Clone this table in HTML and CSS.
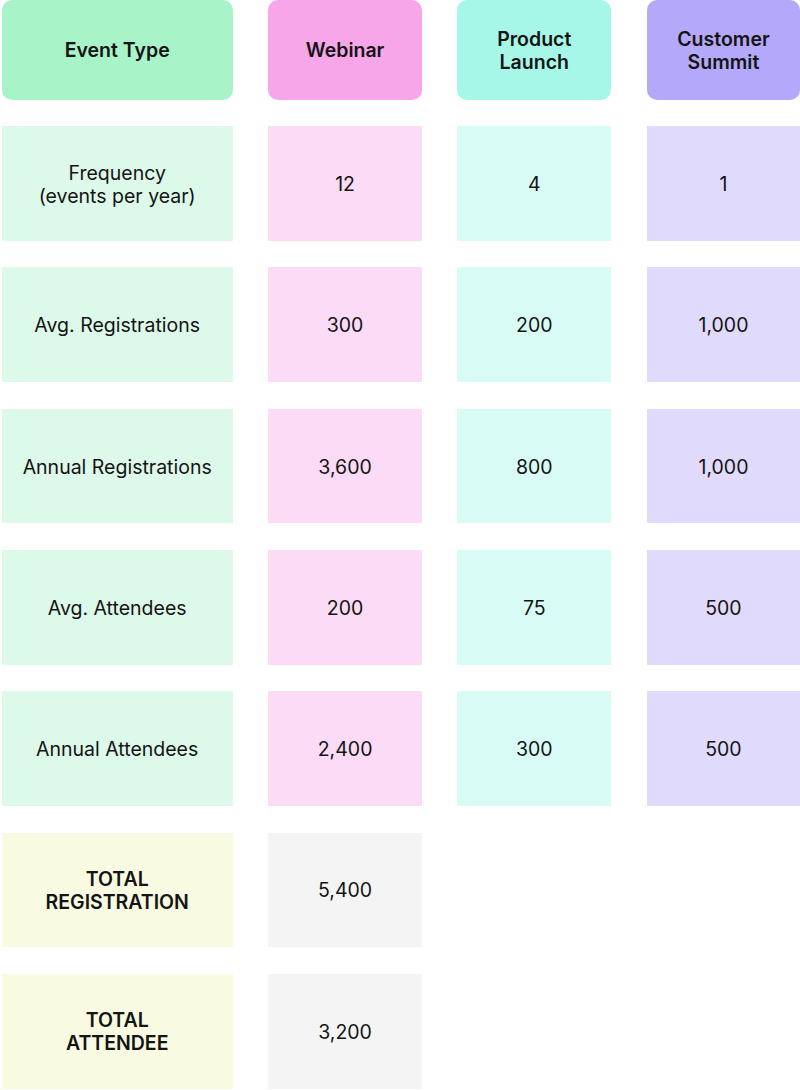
FILE: index.html
```html
<!DOCTYPE html>
<html>
<head>
<meta charset="utf-8">
<link rel="stylesheet" href="styles.css">
</head>
<body>
<div class="table">
  <div class="cell head c1">Event Type</div>
  <div class="cell head c2">Webinar</div>
  <div class="cell head c3">Product<br>Launch</div>
  <div class="cell head c4">Customer<br>Summit</div>

  <div class="cell d1">Frequency<br>(events per year)</div>
  <div class="cell d2">12</div>
  <div class="cell d3">4</div>
  <div class="cell d4">1</div>

  <div class="cell d1">Avg. Registrations</div>
  <div class="cell d2">300</div>
  <div class="cell d3">200</div>
  <div class="cell d4">1,000</div>

  <div class="cell d1">Annual Registrations</div>
  <div class="cell d2">3,600</div>
  <div class="cell d3">800</div>
  <div class="cell d4">1,000</div>

  <div class="cell d1">Avg. Attendees</div>
  <div class="cell d2">200</div>
  <div class="cell d3">75</div>
  <div class="cell d4">500</div>

  <div class="cell d1">Annual Attendees</div>
  <div class="cell d2">2,400</div>
  <div class="cell d3">300</div>
  <div class="cell d4">500</div>

  <div class="cell total-label">TOTAL<br>REGISTRATION</div>
  <div class="cell total-value">5,400</div>
  <div class="empty"></div>
  <div class="empty"></div>

  <div class="cell total-label">TOTAL<br>ATTENDEE</div>
  <div class="cell total-value">3,200</div>
  <div class="empty"></div>
  <div class="empty"></div>
</div>
</body>
</html>
```

FILE: styles.css
```css
html, body {
  margin: 0;
  padding: 0;
  background: #ffffff;
}
body {
  font-family: Inter, "Liberation Sans", sans-serif;
  color: #141414;
}
.table {
  display: grid;
  grid-template-columns: 231px 153.6px 153.6px 153.6px;
  grid-template-rows: 99.6px repeat(7, 114.7px);
  column-gap: 35.6px;
  row-gap: 26.6px;
  padding-left: 1.7px;
}
.cell {
  display: flex;
  align-items: center;
  justify-content: center;
  text-align: center;
  font-size: 19.5px;
  line-height: 23px;
  padding-top: 2px;
}
.head {
  font-weight: 600;
  border-radius: 10px;
}
.c1 { background: #a9f3c9; }
.c2 { background: #f6a6e9; }
.c3 { background: #a7f7e9; }
.c4 { background: #b4a8fa; }
.d1 { background: #ddf9e9; }
.d2 { background: #fbdbf5; }
.d3 { background: #d8fcf5; }
.d4 { background: #e0dafc; }
.total-label {
  background: #f8fbe1;
  font-weight: 600;
}
.total-value {
  background: #f4f4f4;
}
```
